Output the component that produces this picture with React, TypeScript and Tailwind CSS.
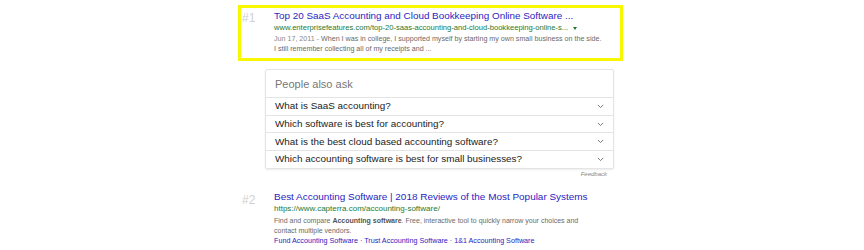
import React from "react";

const font = { fontFamily: '"Liberation Sans", Arial, sans-serif' };

function Chevron() {
  return (
    <svg width="7" height="5" viewBox="0 0 7 5" className="shrink-0">
      <path d="M0.8 0.9 L3.5 3.6 L6.2 0.9" fill="none" stroke="#777" strokeWidth="1" />
    </svg>
  );
}

const questions = [
  "What is SaaS accounting?",
  "Which software is best for accounting?",
  "What is the best cloud based accounting software?",
  "Which accounting software is best for small businesses?",
];

export default function App() {
  return (
    <div className="w-[864px] h-[250px] bg-white overflow-hidden" style={font}>
      <div className="pl-[238px] pt-[5px] flex flex-col">
        {/* Result 1 */}
        <div className="w-[385px] h-[56px] border-[3px] border-[#f7f700] flex">
          <div className="w-[33px] pl-[1px] pt-[3px] text-[12px] leading-[14px] text-[#d0d0d0]">#1</div>
          <div className="flex flex-col pt-[2px]">
            <div className="text-[9.9px] leading-[12px] text-[#2a1dc0] whitespace-nowrap">
              Top 20 SaaS Accounting and Cloud Bookkeeping Online Software ...
            </div>
            <div className="flex items-center gap-[5px] text-[7.6px] leading-[12px] text-[#1c7a33] whitespace-nowrap">
              <span>www.enterprisefeatures.com/top-20-saas-accounting-and-cloud-bookkeeping-online-s...</span>
              <span className="w-0 h-0 border-l-[2.5px] border-r-[2.5px] border-t-[3px] border-l-transparent border-r-transparent border-t-[#1c7a33]" />
            </div>
            <div className="text-[7.13px] leading-[9.5px] text-[#6a6a6a] whitespace-nowrap mt-[1px]">
              <div><span className="text-[#8a8a8a]">Jun 17, 2011 - </span>When I was in college, I supported myself by starting my own small business on the side.</div>
              <div>I still remember collecting all of my receipts and ...</div>
            </div>
          </div>
        </div>

        {/* People also ask */}
        <div className="ml-[27px] mt-[8px] w-[349px] flex flex-col">
          <div className="border border-[#e4e4e4] rounded-[2px] shadow-[0_1px_2px_rgba(0,0,0,0.08)] flex flex-col">
            <div className="h-[27px] pl-[9px] pt-[8px] text-[11px] leading-[13px] text-[#777]">People also ask</div>
            {questions.map((q) => (
              <div key={q} className="h-[17.7px] border-t border-[#e4e4e4] pl-[9px] pr-[9px] flex items-center justify-between">
                <span className="text-[9.9px] leading-[12px] text-[#222] whitespace-nowrap">{q}</span>
                <Chevron />
              </div>
            ))}
          </div>
          <div className="self-end pr-[7px] mt-[1px] text-[6px] leading-[8px] italic text-[#888]">Feedback</div>
        </div>

        {/* Result 2 */}
        <div className="flex mt-[13px]">
          <div className="w-[36px] pl-[4px] pt-[2px] text-[12px] leading-[14px] text-[#d0d0d0]">#2</div>
          <div className="flex flex-col">
            <div className="text-[9.95px] leading-[12px] text-[#2a1dc0] whitespace-nowrap">
              Best Accounting Software | 2018 Reviews of the Most Popular Systems
            </div>
            <div className="text-[8px] leading-[12px] text-[#1c7a33] whitespace-nowrap">
              https://www.capterra.com/accounting-software/
            </div>
            <div className="text-[7px] leading-[10px] text-[#6a6a6a] whitespace-nowrap mt-[1px]">
              <div>Find and compare <b className="text-[#555]">Accounting software</b>. Free, interactive tool to quickly narrow your choices and</div>
              <div>contact multiple vendors.</div>
            </div>
            <div className="text-[7.2px] leading-[10px] text-[#2a1dc0] whitespace-nowrap">
              Fund Accounting Software · Trust Accounting Software · 1&amp;1 Accounting Software
            </div>
          </div>
        </div>
      </div>
    </div>
  );
}
